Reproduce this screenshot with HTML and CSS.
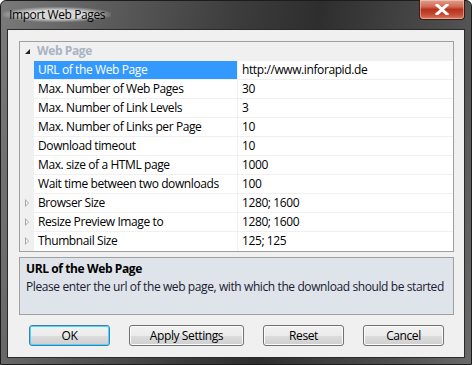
FILE: index.html
```html
<!DOCTYPE html>
<html lang="en">
<head>
    <meta charset="UTF-8">
    <title>Import Web Pages</title>
    <link rel="stylesheet" href="styles.css">
</head>
<body>
    <div class="window">
        <div class="titlebar">
            <span class="title">Import Web Pages</span>
            <button class="close">
                <svg width="14" height="11" viewBox="0 0 14 11"><path d="M2 1 L12 10 M12 1 L2 10" stroke="#fff" stroke-width="3" stroke-linecap="square"/></svg>
            </button>
        </div>

        <div class="client">
            <div class="grid">
                <div class="category">
                    <span class="gutter"><span class="tri-down"></span></span>
                    <span class="cat-name">Web Page</span>
                </div>
                <div class="row selected">
                    <span class="gutter"></span>
                    <span class="name">URL of the Web Page</span>
                    <span class="value">http://www.inforapid.de</span>
                </div>
                <div class="row">
                    <span class="gutter"></span>
                    <span class="name">Max. Number of Web Pages</span>
                    <span class="value">30</span>
                </div>
                <div class="row">
                    <span class="gutter"></span>
                    <span class="name">Max. Number of Link Levels</span>
                    <span class="value">3</span>
                </div>
                <div class="row">
                    <span class="gutter"></span>
                    <span class="name">Max. Number of Links per Page</span>
                    <span class="value">10</span>
                </div>
                <div class="row">
                    <span class="gutter"></span>
                    <span class="name">Download timeout</span>
                    <span class="value">10</span>
                </div>
                <div class="row">
                    <span class="gutter"></span>
                    <span class="name">Max. size of a HTML page</span>
                    <span class="value">1000</span>
                </div>
                <div class="row">
                    <span class="gutter"></span>
                    <span class="name">Wait time between two downloads</span>
                    <span class="value">100</span>
                </div>
                <div class="row">
                    <span class="gutter"><span class="tri-right"></span></span>
                    <span class="name">Browser Size</span>
                    <span class="value">1280; 1600</span>
                </div>
                <div class="row">
                    <span class="gutter"><span class="tri-right"></span></span>
                    <span class="name">Resize Preview Image to</span>
                    <span class="value">1280; 1600</span>
                </div>
                <div class="row">
                    <span class="gutter"><span class="tri-right"></span></span>
                    <span class="name">Thumbnail Size</span>
                    <span class="value">125; 125</span>
                </div>
            </div>

            <div class="description">
                <div class="desc-title">URL of the Web Page</div>
                <div class="desc-text">Please enter the url of the web page, with which the download should be started</div>
            </div>

            <div class="buttons">
                <button class="btn default">OK</button>
                <button class="btn wide">Apply Settings</button>
                <button class="btn">Reset</button>
                <button class="btn">Cancel</button>
            </div>
        </div>
    </div>
</body>
</html>
```

FILE: styles.css
```css
body {
    margin: 0;
    padding: 0;
    background: #fff;
    font-family: "Open Sans", "Noto Sans", sans-serif;
    font-size: 12px;
    letter-spacing: -0.4px;
    color: #000;
}

.window {
    width: 472px;
    height: 365px;
    box-sizing: border-box;
    border: 1px solid #1c1c1c;
    border-radius: 6px 6px 0 0;
    background: linear-gradient(100deg, #7a7a7a 0%, #5c5c5c 20%, #3c3c3c 45%, #2e2e2e 60%, #4e4e4e 85%, #6a6a6a 100%);
    display: flex;
    flex-direction: column;
}

.titlebar {
    height: 28px;
    display: flex;
    justify-content: space-between;
    align-items: flex-start;
    padding: 0 6px 0 7px;
}

.title {
    margin-top: 6px;
    padding: 0 6px;
    margin-left: -5px;
    font-size: 12px;
    line-height: 15px;
    color: #000;
    background: radial-gradient(ellipse at center, rgba(235,235,235,0.85) 40%, rgba(235,235,235,0) 75%);
}

.close {
    width: 46px;
    height: 20px;
    margin-top: -1px;
    border: 1px solid #3a1a14;
    border-top: none;
    border-radius: 0 0 4px 4px;
    background: linear-gradient(#e0a090 0%, #d06a55 35%, #b8321e 50%, #c24a32 75%, #d87a60 100%);
    box-shadow: inset 0 0 0 1px rgba(255,220,200,0.5);
    display: flex;
    align-items: center;
    justify-content: center;
    padding: 0;
}

.client {
    flex: 1;
    margin: 0 6px 6px;
    background: #f0f0f0;
    border: 1px solid #2a2a2a;
    padding: 11px 10px 0 11px;
}

.grid {
    border: 1px solid #a0a0a0;
    background: #fff;
}

.category,
.row {
    display: flex;
    height: 19px;
    line-height: 18px;
}

.category {
    background: #f0f0f0;
}

.gutter {
    width: 14px;
    flex: none;
    background: #f0f0f0;
    position: relative;
}

.cat-name {
    font-weight: bold;
    color: #a9b4c4;
    padding-left: 3px;
}

.name,
.value {
    border-bottom: 1px solid #f0f0f0;
    padding-left: 4px;
    white-space: nowrap;
    overflow: hidden;
}

.name {
    width: 199px;
    border-right: 1px solid #f0f0f0;
}

.value {
    flex: 1;
}

.row:last-child .name,
.row:last-child .value {
    border-bottom: none;
}

.selected .name {
    background: #3399ff;
    color: #fff;
}

.tri-down {
    position: absolute;
    left: 5px;
    top: 7px;
    width: 0;
    height: 0;
    border-left: 5px solid transparent;
    border-bottom: 5px solid #262626;
}

.tri-right {
    position: absolute;
    left: 5px;
    top: 5px;
    width: 0;
    height: 0;
    border-top: 4px solid transparent;
    border-bottom: 4px solid transparent;
    border-left: 4px solid #a6a6a6;
}

.tri-right::after {
    content: '';
    position: absolute;
    left: -3px;
    top: -2px;
    border-top: 2px solid transparent;
    border-bottom: 2px solid transparent;
    border-left: 2px solid #fff;
}

.description {
    margin-top: 5px;
    height: 54px;
    border: 1px solid #a0a0a0;
    background: #dfe3ea;
    padding: 2px 0 0 6px;
}

.desc-title {
    font-weight: bold;
    line-height: 18px;
}

.desc-text {
    line-height: 18px;
    color: #1a1a33;
    white-space: nowrap;
}

.buttons {
    display: flex;
    gap: 19px;
    margin-top: 10px;
    padding-left: 10px;
}

.btn {
    width: 81px;
    height: 21px;
    padding: 0;
    font-family: inherit;
    font-size: 12px;
    letter-spacing: -0.4px;
    color: #000;
    border: 1px solid #707070;
    border-radius: 3px;
    background: linear-gradient(#f2f2f2 0%, #ebebeb 50%, #dddddd 51%, #cfcfcf 100%);
    box-shadow: inset 0 0 0 1px #fcfcfc;
}

.btn.wide {
    width: 115px;
}

.btn.default {
    border-color: #3c7fb1;
    box-shadow: inset 0 0 0 1px #48d8fb;
}
```
